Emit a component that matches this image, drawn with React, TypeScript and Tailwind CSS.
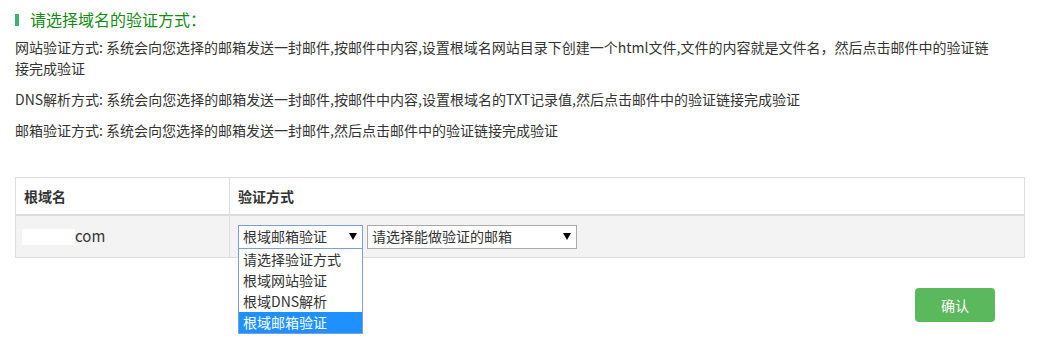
import React from "react";

const font = "font-['Microsoft_YaHei','Noto_Sans_CJK_SC',sans-serif]";

function Caret() {
  return (
    <svg width="8" height="7" viewBox="0 0 8 7" className="shrink-0">
      <path d="M0 0 H8 L4 7 Z" fill="#000" />
    </svg>
  );
}

const options = ["请选择验证方式", "根域网站验证", "根域DNS解析", "根域邮箱验证"];

export default function App() {
  return (
    <div className={`w-[1049px] h-[347px] bg-white text-[14px] text-[#333] ${font}`}>
      <div className="ml-[15px] w-[1010px] pt-[9px]">
        {/* title */}
        <div className="flex items-center h-[21px]">
          <span className="w-[4px] h-[12px] bg-[#3cb371]" />
          <span className="ml-[11px] text-[16px] leading-[21px] text-[#138a13]">请选择域名的验证方式：</span>
        </div>

        <div className="mt-[7px] leading-[21px]">
          <p>
            网站验证方式: 系统会向您选择的邮箱发送一封邮件,按邮件中内容,设置根域名网站目录下创建一个html文件,文件的内容就是文件名，然后点击邮件中的验证链
            <br />
            接完成验证
          </p>
          <p className="mt-[10px]">
            DNS解析方式: 系统会向您选择的邮箱发送一封邮件,按邮件中内容,设置根域名的TXT记录值,然后点击邮件中的验证链接完成验证
          </p>
          <p className="mt-[10px]">邮箱验证方式: 系统会向您选择的邮箱发送一封邮件,然后点击邮件中的验证链接完成验证</p>
        </div>

        {/* table */}
        <div className="mt-[36px] border border-[#dddddd]">
          <div className="flex h-[38px] border-b-2 border-[#dddddd] font-bold">
            <div className="w-[214px] border-r border-[#dddddd] pl-[8px] flex items-center">根域名</div>
            <div className="flex-1 pl-[8px] flex items-center">验证方式</div>
          </div>
          <div className="flex h-[41px] bg-[#f3f3f3]">
            <div className="w-[214px] border-r border-[#dddddd] pl-[6px] flex items-center">
              <span className="w-[53px] h-[16px] bg-white" />
              <span className="text-[15px]">com</span>
            </div>
            <div className="flex-1 pl-[8px] flex items-center gap-[4px]">
              <div className="relative">
                <div className="w-[125px] h-[24px] border border-[#7f9dd8] bg-white flex items-center justify-between pl-[4px] pr-[5px]">
                  <span>根域邮箱验证</span>
                  <Caret />
                </div>
                <div className="absolute left-0 top-[23px] w-[125px] border border-[#7f9dd8] bg-white z-10">
                  {options.map((o, i) => (
                    <div
                      key={o}
                      className={`h-[21px] leading-[21px] pl-[4px] ${i === 3 ? "bg-[#1e90ff] text-white" : ""}`}
                    >
                      {o}
                    </div>
                  ))}
                </div>
              </div>
              <div className="w-[210px] h-[24px] border border-[#aaaaaa] bg-white flex items-center justify-between pl-[4px] pr-[5px]">
                <span>请选择能做验证的邮箱</span>
                <Caret />
              </div>
            </div>
          </div>
        </div>

        <div className="mt-[30px] flex justify-end pr-[30px]">
          <button className="w-[80px] h-[34px] rounded-[4px] bg-[#5cb85c] text-white text-[14px]">确认</button>
        </div>
      </div>
    </div>
  );
}
